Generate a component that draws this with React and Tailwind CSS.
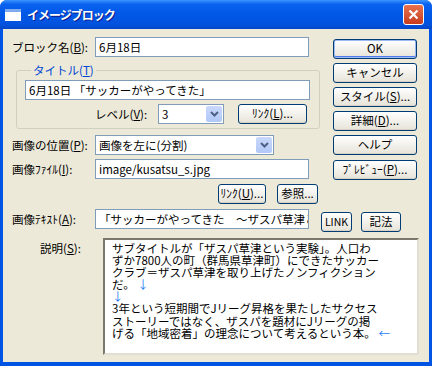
import React from 'react';

const U = ({ children }) => <span className="underline underline-offset-[1px]">{children}</span>;

const TextBox = ({ className = '', children }) => (
  <div className={`h-[20px] border border-[#7f9db9] bg-white flex items-center pl-[3px] overflow-hidden whitespace-nowrap ${className}`}>
    {children}
  </div>
);

const Select = ({ className = '', children }) => (
  <div className={`h-[20px] border border-[#7f9db9] bg-white flex items-center ${className}`}>
    <div className="flex-1 pl-[3px] whitespace-nowrap overflow-hidden">{children}</div>
    <div className="w-[16px] h-[16px] mr-[1px] rounded-[2px] bg-linear-to-b from-[#c9d8fc] to-[#b1c8f6] flex items-center justify-center">
      <svg width="9" height="6" viewBox="0 0 9 6">
        <path d="M1 1 L4.5 4.5 L8 1" stroke="#4d6185" strokeWidth="2" fill="none" />
      </svg>
    </div>
  </div>
);

const Btn = ({ className = '', primary, children }) => (
  <button
    className={`h-[20px] rounded-[3px] border border-[#003c74] bg-linear-to-b from-white to-[#e6e3d8] flex items-center justify-center leading-none whitespace-nowrap ${primary ? 'shadow-[inset_0_0_0_1px_#9bb9f4,inset_0_-1px_0_1px_#4f7cea]' : 'shadow-[inset_0_-1px_0_0_#d6d0c5]'} ${className}`}
  >
    {children}
  </button>
);

export default function App() {
  return (
    <div className="w-[432px] h-[366px] bg-[#0054e3] flex flex-col text-[11.5px] leading-[14px] text-black whitespace-nowrap font-['Noto_Sans_CJK_JP',sans-serif] rounded-t-[7px] overflow-hidden">
      {/* タイトルバー */}
      <div className="h-[29px] shrink-0 flex items-center bg-[linear-gradient(to_bottom,#3d95ff_0%,#0a63ef_14%,#0058e8_45%,#0252de_85%,#0346c8_100%)] pl-[5px] pr-[8px]">
        <div className="w-[16px] h-[12px] bg-white border-t-[3px] border-[#7eaaf0] mt-[1px]" />
        <div className="ml-[6px] text-white font-bold text-[12px] tracking-[-1px] [text-shadow:1px_1px_#0a1a8a]">イメージブロック</div>
        <div className="flex-1" />
        <div className="w-[21px] h-[21px] rounded-[3px] border border-white bg-linear-to-b from-[#e8714e] to-[#c83b1b] flex items-center justify-center">
          <svg width="11" height="11" viewBox="0 0 11 11">
            <path d="M1.5 1.5 L9.5 9.5 M9.5 1.5 L1.5 9.5" stroke="white" strokeWidth="2.2" />
          </svg>
        </div>
      </div>

      {/* 本体 */}
      <div className="flex-1 mx-[3px] mb-[4px] bg-[#ece9d8] flex flex-col">
        <div className="flex">
          {/* 左カラム */}
          <div className="w-[327px] pt-[8px]">
            <div className="flex items-center h-[20px]">
              <div className="w-[92px] pl-[9px]">ブロック名(<U>B</U>):</div>
              <TextBox className="w-[214px]">6月18日</TextBox>
            </div>

            <fieldset className="ml-[13px] mt-[6px] w-[304px] border border-[#d0d0bf] rounded-[3px] pl-[8px] pb-[4px]">
              <legend className="text-[#0046d5] ml-[6px] px-[2px] leading-[14px]">タイトル(<U>T</U>)</legend>
              <TextBox className="w-[285px] mt-[3px]">6月18日 「サッカーがやってきた」</TextBox>
              <div className="flex items-center mt-[4px] h-[20px]">
                <div className="w-[133px] pl-[70px]">レベル(<U>V</U>):</div>
                <Select className="w-[66px]">3</Select>
                <Btn className="w-[69px] ml-[14px]">ﾘﾝｸ(<U>L</U>)...</Btn>
              </div>
            </fieldset>

            <div className="flex items-center h-[20px] mt-[6px]">
              <div className="w-[92px] pl-[9px]">画像の位置(<U>P</U>):</div>
              <Select className="w-[179px]">画像を左に(分割)</Select>
            </div>
            <div className="flex items-center h-[20px] mt-[4px]">
              <div className="w-[92px] pl-[9px]">画像ﾌｧｲﾙ(<U>I</U>):</div>
              <TextBox className="w-[214px]">image/kusatsu_s.jpg</TextBox>
            </div>
            <div className="flex justify-end gap-[11px] w-[315px] mt-[5px]">
              <Btn className="w-[48px]">ﾘﾝｸ(<U>U</U>)...</Btn>
              <Btn className="w-[41px]">参照...</Btn>
            </div>
          </div>

          {/* 右カラム */}
          <div className="w-[84px] ml-[3px] pt-[10px] flex flex-col">
            <Btn primary>OK</Btn>
            <Btn className="mt-[4px]">キャンセル</Btn>
            <Btn className="mt-[4px]">スタイル(<U>S</U>)...</Btn>
            <Btn className="mt-[4px]">詳細(<U>D</U>)...</Btn>
            <Btn className="mt-[4px]">ヘルプ</Btn>
            <Btn className="mt-[5px]">ﾌﾟﾚﾋﾞｭｰ(<U>P</U>)...</Btn>
          </div>
        </div>

        <div className="flex items-center h-[20px] mt-[5px]">
          <div className="w-[92px] pl-[9px]">画像ﾃｷｽﾄ(<U>A</U>):</div>
          <TextBox className="w-[214px]">「サッカーがやってきた　～ザスパ草津という実験」</TextBox>
          <Btn className="w-[31px] h-[17px] ml-[12px] mt-[6px] text-[10.5px]">LINK</Btn>
          <Btn className="w-[40px] h-[17px] ml-[9px] mt-[6px]">記法</Btn>
        </div>

        <div className="flex mt-[9px]">
          <div className="w-[100px] pl-[37px] pt-[3px]">説明(<U>S</U>):</div>
          <div className="w-[316px] h-[117px] bg-white border-2 border-t-[#7a786c] border-l-[#7a786c] border-r-[#e2dfd2] border-b-[#e2dfd2] pl-[7px] pt-[2px] text-[11.5px] leading-[12.1px] overflow-hidden">
            サブタイトルが「ザスパ草津という実験」。人口わ<br />
            ずか7800人の町（群馬県草津町）にできたサッカー<br />
            クラブ＝ザスパ草津を取り上げたノンフィクション<br />
            だ。<span className="text-[#1e7cf5]"> ↓</span><br />
            <span className="text-[#1e7cf5]">↓</span><br />
            3年という短期間でJリーグ昇格を果たしたサクセス<br />
            ストーリーではなく、ザスパを題材にJリーグの掲<br />
            げる「地域密着」の理念について考えるという本。<span className="text-[#1e7cf5]"> ←</span>
          </div>
        </div>
      </div>
    </div>
  );
}
